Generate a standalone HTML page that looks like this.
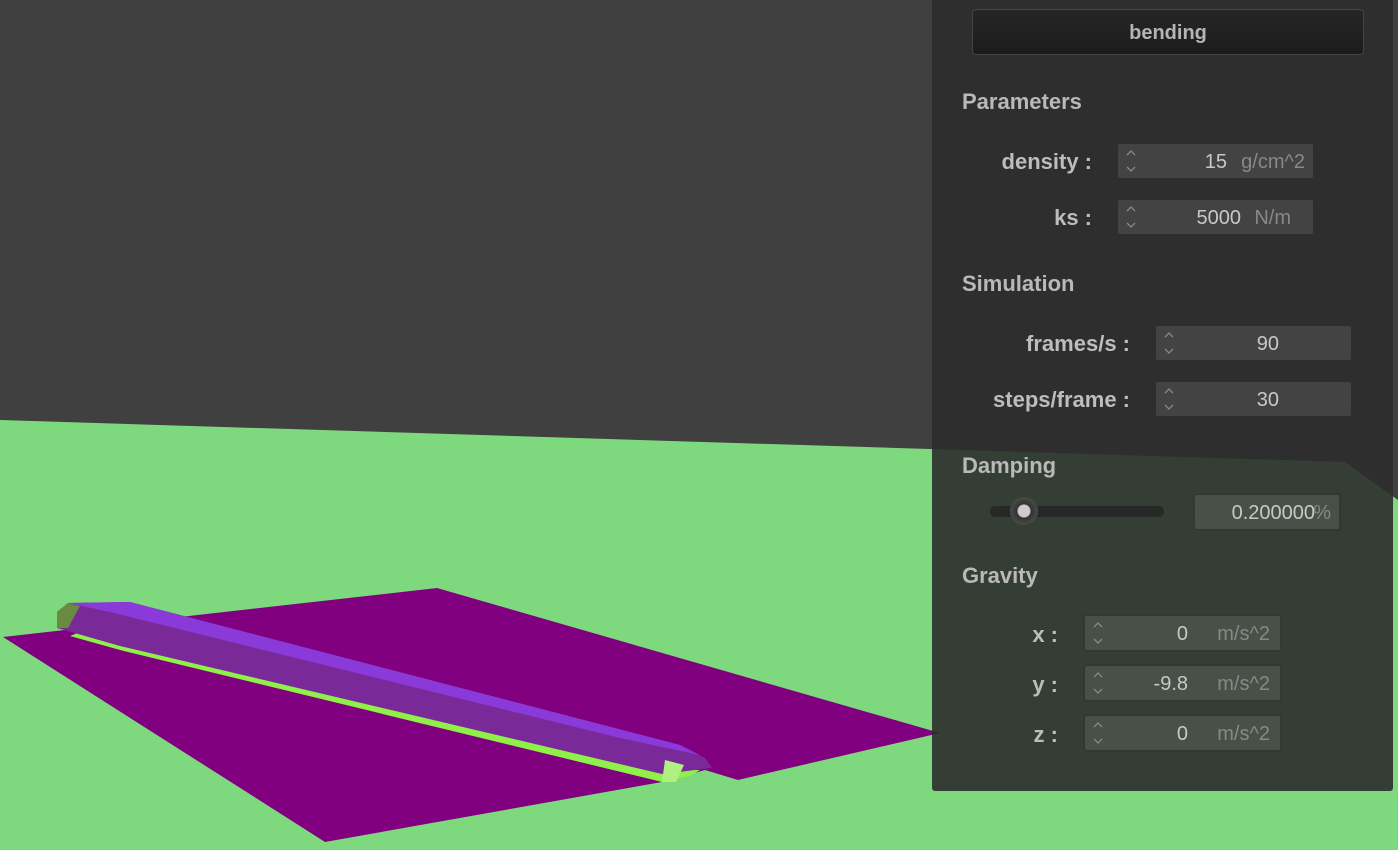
<!DOCTYPE html>
<html><head><meta charset="utf-8"><style>
html,body{margin:0;padding:0;width:1398px;height:850px;overflow:hidden;background:#7ed97e;font-family:"Liberation Sans",sans-serif}
svg.bg{position:absolute;left:0;top:0}
.panel{position:absolute;left:932px;top:-4px;width:461px;height:795px;background:rgba(44,44,44,0.9);border-radius:3px}
.btn{position:absolute;left:972px;top:9px;width:390px;height:44px;background:linear-gradient(#262626,#1c1c1c);border:1px solid #444;border-radius:4px;color:#b4b4b4;font-weight:bold;font-size:20px;text-align:center;line-height:47px}
.h{position:absolute;left:962px;color:#b9b9b9;font-weight:bold;font-size:22px}
.lab{position:absolute;color:#bdbdbd;font-weight:bold;font-size:22px;text-align:right}
.f{position:absolute;height:38px;background:rgba(255,255,255,0.1);border:2px solid rgba(0,0,0,0.3);border-radius:4px;box-sizing:border-box;font-size:20px;color:#c8c8c8;line-height:36px}
.f svg{position:absolute;left:7px;top:4px}
.f .v{position:absolute;text-align:right}
.f .u{position:absolute;color:#888}
</style></head><body>
<svg class="bg" width="1398" height="850">
<polygon points="0,0 1398,0 1398,500 1345,462 0,420" fill="#404040"/>
<polygon points="3,637 437,588 940,733 738,780 705,770 662,782 325,842" fill="#800080"/>
<polygon points="80,632 120,640 662,770 700,770 690,776 662,782 120,650 70,636" fill="#8ef048"/>
<polygon points="57,612 68,603 130,602 680,745 705,758 712,768 662,774 120,646 57,628" fill="#7a2a98"/>
<polygon points="68,603 130,602 680,745 700,755 620,738 110,612" fill="#8a3ad8"/>
<polygon points="57,612 68,603 80,606 68,628 57,628" fill="#6a8a40"/>
<polygon points="665,760 684,765 676,782 662,782" fill="#b0f080"/>
</svg>
<div class="panel"></div>
<div class="btn">bending</div>
<div class="h" style="top:89px">Parameters</div>
<div class="lab" style="left:960px;width:132px;top:149px">density :</div>
<div class="f" style="left:1116px;top:142px;width:199px"><svg width="12" height="26"><path d="M2 7 L6 3 L10 7 M2 19 L6 23 L10 19" stroke="#888" fill="none" stroke-width="1.3"/></svg><span class="v" style="right:86px">15</span><span class="u" style="right:8px">g/cm^2</span></div>
<div class="lab" style="left:960px;width:132px;top:205px">ks :</div>
<div class="f" style="left:1116px;top:198px;width:199px"><svg width="12" height="26"><path d="M2 7 L6 3 L10 7 M2 19 L6 23 L10 19" stroke="#888" fill="none" stroke-width="1.3"/></svg><span class="v" style="right:72px">5000</span><span class="u" style="right:22px">N/m</span></div>
<div class="h" style="top:271px">Simulation</div>
<div class="lab" style="left:960px;width:170px;top:331px">frames/s :</div>
<div class="f" style="left:1154px;top:324px;width:199px"><svg width="12" height="26"><path d="M2 7 L6 3 L10 7 M2 19 L6 23 L10 19" stroke="#888" fill="none" stroke-width="1.3"/></svg><span class="v" style="right:72px">90</span></div>
<div class="lab" style="left:960px;width:170px;top:387px">steps/frame :</div>
<div class="f" style="left:1154px;top:380px;width:199px"><svg width="12" height="26"><path d="M2 7 L6 3 L10 7 M2 19 L6 23 L10 19" stroke="#888" fill="none" stroke-width="1.3"/></svg><span class="v" style="right:72px">30</span></div>
<div class="h" style="top:453px">Damping</div>
<div style="position:absolute;left:990px;top:506px;width:174px;height:11px;background:#262a26;border-radius:6px"></div>
<div style="position:absolute;left:1010px;top:497px;width:28px;height:28px;border-radius:50%;background:radial-gradient(circle,#ccc 0 6px,#333 7px,#4a4a4a 14px)"></div>
<div class="f" style="left:1193px;top:493px;width:148px"><span class="v" style="right:24px">0.200000</span><span class="u" style="right:8px">%</span></div>
<div class="h" style="top:563px">Gravity</div>
<div class="lab" style="left:1000px;width:58px;top:622px">x :</div>
<div class="f" style="left:1083px;top:614px;width:199px"><svg width="12" height="26"><path d="M2 7 L6 3 L10 7 M2 19 L6 23 L10 19" stroke="#888" fill="none" stroke-width="1.3"/></svg><span class="v" style="right:92px">0</span><span class="u" style="right:10px">m/s^2</span></div>
<div class="lab" style="left:1000px;width:58px;top:672px">y :</div>
<div class="f" style="left:1083px;top:664px;width:199px"><svg width="12" height="26"><path d="M2 7 L6 3 L10 7 M2 19 L6 23 L10 19" stroke="#888" fill="none" stroke-width="1.3"/></svg><span class="v" style="right:92px">-9.8</span><span class="u" style="right:10px">m/s^2</span></div>
<div class="lab" style="left:1000px;width:58px;top:722px">z :</div>
<div class="f" style="left:1083px;top:714px;width:199px"><svg width="12" height="26"><path d="M2 7 L6 3 L10 7 M2 19 L6 23 L10 19" stroke="#888" fill="none" stroke-width="1.3"/></svg><span class="v" style="right:92px">0</span><span class="u" style="right:10px">m/s^2</span></div>
</body></html>
